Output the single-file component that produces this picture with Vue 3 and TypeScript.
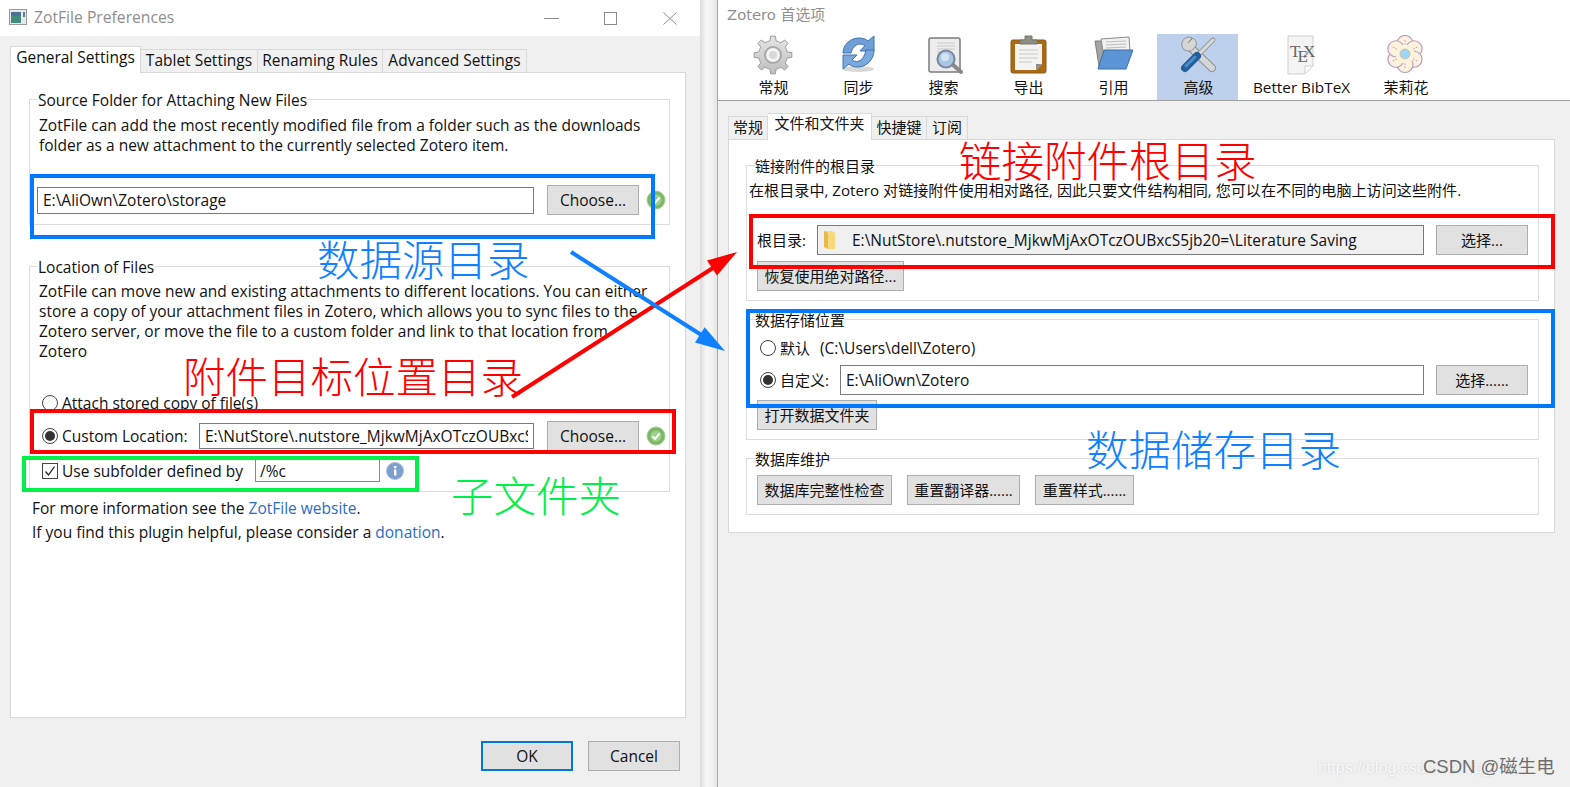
<script setup lang="ts">
const toolbar = [
  { label: '常规', icon: 'gear' },
  { label: '同步', icon: 'sync' },
  { label: '搜索', icon: 'search' },
  { label: '导出', icon: 'clip' },
  { label: '引用', icon: 'folder' },
  { label: '高级', icon: 'tools', active: true },
  { label: 'Better BibTeX', icon: 'tex', wide: true },
  { label: '茉莉花', icon: 'flower', last: true },
]

// 8 teeth gear outline, centred in a 40 box
function gearPath(): string {
  const pts: string[] = []
  const teeth = 8
  for (let i = 0; i < teeth; i++) {
    const a = (i / teeth) * Math.PI * 2
    const step = (Math.PI * 2) / teeth
    const list: [number, number][] = [
      [14.5, a - step * 0.5],
      [14.5, a - step * 0.27],
      [19, a - step * 0.16],
      [19, a + step * 0.16],
      [14.5, a + step * 0.27],
    ]
    for (const [r, t] of list) {
      pts.push(`${(20 + r * Math.cos(t)).toFixed(2)} ${(20 + r * Math.sin(t)).toFixed(2)}`)
    }
  }
  return 'M' + pts.join('L') + 'Z'
}
const gear = gearPath()

const petals = [0, 1, 2, 3, 4, 5].map((i) => {
  const a = (i * Math.PI) / 3 - Math.PI / 2
  return {
    cx: 20 + 10.5 * Math.cos(a),
    cy: 19 + 10.5 * Math.sin(a),
    dx: 20 + 9.5 * Math.cos(a),
    dy: 19 + 9.5 * Math.sin(a),
    ex: 20 + 14 * Math.cos(a),
    ey: 19 + 14 * Math.sin(a),
  }
})
</script>

<template>
  <div class="screen">
    <!-- ZotFile window -->
    <section class="win-left">
      <header class="titlebar">
        <svg class="app-icon" width="18" height="16" viewBox="0 0 18 16">
          <rect x="0.5" y="0.5" width="17" height="15" fill="#e8e8e8" stroke="#9a9a9a" />
          <rect x="2" y="3" width="10" height="11" fill="#3f8c7c" />
          <rect x="2" y="3" width="10" height="4" fill="#4d6f9c" />
          <rect x="14" y="3" width="2" height="5" fill="#5a7f8f" />
        </svg>
        <span class="title-text">ZotFile Preferences</span>
        <div class="controls">
          <span class="ctl"><svg width="15" height="13" viewBox="0 0 15 13"><path d="M0 6.5H15" stroke="#8c8c8c" /></svg></span>
          <span class="ctl"><svg width="13" height="13" viewBox="0 0 13 13"><rect x="0.5" y="0.5" width="12" height="12" fill="none" stroke="#8c8c8c" /></svg></span>
          <span class="ctl"><svg width="14" height="13" viewBox="0 0 14 13"><path d="M0.5 0.5L13.5 12.5M13.5 0.5L0.5 12.5" stroke="#8c8c8c" /></svg></span>
        </div>
      </header>

      <div class="left-body">
        <nav class="tabs">
          <span class="tab active">General Settings</span>
          <span class="tab t-tablet">Tablet Settings</span>
          <span class="tab t-rename">Renaming Rules</span>
          <span class="tab t-adv">Advanced Settings</span>
        </nav>
        <div class="panel left-panel">
          <fieldset class="group">
            <legend>Source Folder for Attaching New Files</legend>
            <p class="desc">ZotFile can add the most recently modified file from a folder such as the downloads<br />folder as a new attachment to the currently selected Zotero item.</p>
            <div class="row row-source">
              <input class="field f-source" readonly value="E:\AliOwn\Zotero\storage" />
              <button class="btn b-choose">Choose...</button>
              <svg class="ok-icon" width="20" height="20" viewBox="0 0 20 20">
                <circle cx="10" cy="10" r="9" fill="#7cb765" stroke="#a5cf92" />
                <circle cx="10" cy="10" r="5.5" fill="#9fd08a" />
                <path d="M6.5 10.2L9 12.7L13.6 7.6" fill="none" stroke="#fff" stroke-width="2" />
              </svg>
            </div>
          </fieldset>

          <fieldset class="group group-loc">
            <legend>Location of Files</legend>
            <p class="desc">ZotFile can move new and existing attachments to different locations. You can either<br />store a copy of your attachment files in Zotero, which allows you to sync files to the<br />Zotero server, or move the file to a custom folder and link to that location from<br />Zotero</p>
            <div class="row row-attach">
              <span class="radio"></span>
              <span class="opt">Attach stored copy of file(s)</span>
            </div>
            <div class="row row-custom">
              <span class="radio on"></span>
              <span class="opt custom-label">Custom Location:</span>
              <input class="field f-custom" readonly value="E:\NutStore\.nutstore_MjkwMjAxOTczOUBxcS5jb20=\Literature Saving" />
              <button class="btn b-choose">Choose...</button>
              <svg class="ok-icon" width="20" height="20" viewBox="0 0 20 20">
                <circle cx="10" cy="10" r="9" fill="#7cb765" stroke="#a5cf92" />
                <circle cx="10" cy="10" r="5.5" fill="#9fd08a" />
                <path d="M6.5 10.2L9 12.7L13.6 7.6" fill="none" stroke="#fff" stroke-width="2" />
              </svg>
            </div>
            <div class="row row-sub">
              <span class="check">
                <svg width="14" height="14" viewBox="0 0 14 14"><path d="M2.5 7.5L5.5 11L11.5 2.5" fill="none" stroke="#222" stroke-width="1.3" /></svg>
              </span>
              <span class="opt sub-label">Use subfolder defined by</span>
              <input class="field f-sub" readonly value="/%c" />
              <svg class="info-icon" width="18" height="18" viewBox="0 0 18 18">
                <circle cx="9" cy="9" r="8.5" fill="#7d9fcd" stroke="#a9c0de" />
                <rect x="8" y="7.5" width="2.4" height="6" fill="#fff" />
                <rect x="8" y="4" width="2.4" height="2.2" fill="#fff" />
              </svg>
            </div>
          </fieldset>

          <p class="more first">For more information see the <a class="link">ZotFile website</a>.</p>
          <p class="more">If you find this plugin helpful, please consider a <a class="link">donation</a>.</p>
        </div>
        <footer class="dlg-buttons">
          <button class="btn b-ok">OK</button>
          <button class="btn b-cancel">Cancel</button>
        </footer>
      </div>
    </section>

    <div class="gutter"></div>

    <!-- Zotero window -->
    <section class="win-right">
      <header class="right-head">
        <div class="right-title">Zotero 首选项</div>
        <div class="toolbar">
          <div
            v-for="item in toolbar"
            :key="item.label"
            class="tool"
            :class="{ active: item.active, wide: item.wide, last: item.last }"
          >
            <svg class="tool-icon" width="40" height="40" viewBox="0 0 40 40">
              <g v-if="item.icon === 'gear'">
                <defs>
                  <linearGradient id="gearFill" x1="0" y1="0" x2="0" y2="1">
                    <stop offset="0" stop-color="#e6e6e6" />
                    <stop offset="1" stop-color="#bdbdbd" />
                  </linearGradient>
                </defs>
                <path :d="gear" fill="url(#gearFill)" stroke="#9c9c9c" />
                <circle cx="20" cy="20" r="8" fill="#f4f4f4" stroke="#a8a8a8" stroke-width="2" />
                <circle cx="20" cy="20" r="4" fill="#d8d8d8" />
              </g>
              <g v-else-if="item.icon === 'sync'">
                <ellipse cx="20" cy="34" rx="16" ry="3" fill="#d8d8d8" />
                <path d="M5 18C5 9 13 3 21 3C25 3 28 4 30 6L36 1V16H22L27 10.5C21 7 15 10 13 18Z" fill="#6f9fd6" stroke="#3f74b4" />
                <path d="M36 15C36 25 28 32 20 32C16 32 13 31 11 29L5 34V20H19L14 25C20 29 26 25 28 15Z" fill="#7aa7dc" stroke="#3f74b4" />
              </g>
              <g v-else-if="item.icon === 'search'">
                <rect x="6" y="3" width="31" height="34" rx="2" fill="#ededed" stroke="#7b7b7b" stroke-width="1.5" />
                <path d="M14 8H32M14 11H32M14 14H32M14 17H20" stroke="#c9c9c9" />
                <path d="M29 29L38 37" stroke="#8a8a8a" stroke-width="4" stroke-linecap="round" />
                <circle cx="23" cy="24" r="8.5" fill="#a9c6e8" stroke="#7d8c9c" stroke-width="2.2" />
                <circle cx="22" cy="22" r="4" fill="#d4e3f4" />
              </g>
              <g v-else-if="item.icon === 'clip'">
                <rect x="3" y="5" width="35" height="33" rx="2" fill="#a96c14" stroke="#8b5a16" />
                <path d="M7 9H34V29L28 35H7Z" fill="#f3f3f1" />
                <path d="M34 29L28 35V29Z" fill="#8e8e8e" />
                <path d="M11 15H30M11 19H30M11 23H30M11 27H24" stroke="#c8c8c8" />
                <path d="M12 9V5H17V1H24V5H29V9Z" fill="#8f8f84" stroke="#77776c" />
              </g>
              <g v-else-if="item.icon === 'folder'">
                <path d="M2 6H12V31H6Z" fill="#a4a4a4" stroke="#7c7c7c" />
                <path d="M8 4L36 2L37 16H10Z" fill="#f1f1f1" stroke="#8a8a8a" />
                <path d="M13 7L33 6M13 10L33 9M13 13L33 12" stroke="#bdbdbd" />
                <path d="M11 15H40L33 34H5Z" fill="#5c95d6" stroke="#3d6ea8" />
              </g>
              <g v-else-if="item.icon === 'tools'">
                <path d="M11 11L34 33" stroke="#8f8f8f" stroke-width="8" stroke-linecap="round" />
                <path d="M11 11L34 33" stroke="#d5d5d5" stroke-width="6" stroke-linecap="round" />
                <path d="M14 3C10 1 5 3 4 8C3.500 10 4 12 5 13.500C7 16 12 17 14.500 15L18 11C19 8 18 5 15 3L10 8Z" fill="#d5d5d5" stroke="#8f8f8f" />
                <path d="M35 5L22 18" stroke="#9a9a9a" stroke-width="5" stroke-linecap="round" />
                <path d="M35 5L22 18" stroke="#d9d9d9" stroke-width="3" stroke-linecap="round" />
                <path d="M19 21L7 33" stroke="#235e9c" stroke-width="8" stroke-linecap="round" />
                <path d="M17 22L8 31" stroke="#4c8ccb" stroke-width="3" stroke-linecap="round" />
              </g>
              <g v-else-if="item.icon === 'tex'">
                <path d="M7 1H32V31L24 39H7Z" fill="#f4f4f4" stroke="#cfcfcf" />
                <path d="M32 31L24 39V31Z" fill="#fff" stroke="#cfcfcf" />
                <text class="tex-t" x="9" y="22">T</text>
                <text class="tex-t" x="16.500" y="27">E</text>
                <text class="tex-t" x="22" y="22">X</text>
              </g>
              <g v-else>
                <circle v-for="(p, i) in petals" :key="i" :cx="p.cx" :cy="p.cy" r="8" fill="#fdf3dc" stroke="#b99bc2" stroke-width="1.2" />
                <circle cx="20" cy="19" r="9.500" fill="#fdf3dc" />
                <path
                  v-for="(p, i) in petals"
                  :key="'d' + i"
                  :d="`M${p.dx} ${p.dy}L${p.ex} ${p.ey}`"
                  stroke="#c9a6c9"
                  stroke-width="1.2"
                  stroke-dasharray="1.500 1.500"
                />
                <circle cx="20" cy="19" r="5" fill="#9dd6fb" stroke="#d3b98a" stroke-width="0.8" />
              </g>
            </svg>
            <span class="tool-label">{{ item.label }}</span>
          </div>
        </div>
      </header>

      <div class="right-body">
        <nav class="tabs right-tabs">
          <span class="tab r1">常规</span>
          <span class="tab active r2">文件和文件夹</span>
          <span class="tab r3">快捷键</span>
          <span class="tab r4">订阅</span>
        </nav>
        <div class="panel right-panel">
          <fieldset class="rgroup">
            <legend>链接附件的根目录</legend>
            <p class="rdesc">在根目录中, Zotero 对链接附件使用相对路径, 因此只要文件结构相同, 您可以在不同的电脑上访问这些附件.</p>
            <div class="row rrow rrow-base">
              <span class="rlabel">根目录:</span>
              <div class="field f-base">
                <svg width="14" height="20" viewBox="0 0 14 20">
                  <path d="M1 1H9L12 3V19H5L1 17Z" fill="#f7d97a" />
                  <path d="M1 1L5 3V19L1 17Z" fill="#e8b94a" />
                </svg>
                <span class="base-path">E:\NutStore\.nutstore_MjkwMjAxOTczOUBxcS5jb20=\Literature Saving</span>
              </div>
              <button class="btn b-pick">选择...</button>
            </div>
            <button class="btn b-restore">恢复使用绝对路径...</button>
          </fieldset>

          <fieldset class="rgroup">
            <legend>数据存储位置</legend>
            <div class="row rrow rrow-default">
              <span class="radio"></span>
              <span class="ropt">默认<span class="home-path">(C:\Users\dell\Zotero)</span></span>
            </div>
            <div class="row rrow rrow-data">
              <span class="radio on"></span>
              <span class="ropt data-label">自定义:</span>
              <input class="field f-data" readonly value="E:\AliOwn\Zotero" />
              <button class="btn b-pick">选择......</button>
            </div>
            <button class="btn b-open">打开数据文件夹</button>
          </fieldset>

          <fieldset class="rgroup">
            <legend>数据库维护</legend>
            <div class="row db-row">
              <button class="btn b-db1">数据库完整性检查</button>
              <button class="btn b-db2">重置翻译器......</button>
              <button class="btn b-db3">重置样式......</button>
            </div>
          </fieldset>
        </div>
      </div>
    </section>

    <!-- hand drawn annotations on top of the screenshot -->
    <svg class="arrows" width="1570" height="787" viewBox="0 0 1570 787">
      <path d="M512 397L716 266" stroke="#ff0000" stroke-width="4" fill="none" />
      <path d="M737 252L707 260.400L717 275.600Z" fill="#ff0000" />
      <path d="M571 252L703 336" stroke="#0f80ff" stroke-width="4" fill="none" />
      <path d="M725 351L695 342.400L704.700 327.200Z" fill="#0f80ff" />
    </svg>
    <div class="mark m-source"></div>
    <div class="mark m-custom"></div>
    <div class="mark m-sub"></div>
    <div class="mark m-base"></div>
    <div class="mark m-data"></div>
    <span class="note n-source">数据源目录</span>
    <span class="note n-custom">附件目标位置目录</span>
    <span class="note n-sub">子文件夹</span>
    <span class="note n-base">链接附件根目录</span>
    <span class="note n-data">数据储存目录</span>

    <span class="wm-url">https://blog.csdn.net/qq_</span>
    <span class="wm">CSDN @磁生电</span>
  </div>
</template>

<style>
html,
body {
  margin: 0;
  background: #f0f0f0;
}
</style>

<style scoped>
.screen {
  position: relative;
  display: flex;
  width: 1570px;
  height: 787px;
  overflow: hidden;
  font-family: "Open Sans", "Noto Sans CJK SC", sans-serif;
  font-size: 15.5px;
  line-height: 20px;
  color: #111;
  background: #f0f0f0;
}

/* left window */
.win-left {
  width: 700px;
  flex: none;
  display: flex;
  flex-direction: column;
}
.titlebar {
  height: 36px;
  flex: none;
  display: flex;
  align-items: center;
  background: #fff;
  padding-left: 9px;
}
.app-icon {
  margin-right: 7px;
  margin-top: -2px;
}
.title-text {
  color: #8e8e8e;
  font-size: 15.7px;
  margin-top: -2px;
}
.controls {
  margin-left: auto;
  display: flex;
  padding-right: 1px;
}
.ctl {
  width: 59px;
  height: 30px;
  display: flex;
  align-items: center;
  justify-content: center;
}
.left-body {
  flex: 1;
  padding: 10px 14px 0 10px;
}
.tabs {
  display: flex;
  align-items: flex-end;
  height: 26px;
  position: relative;
}
.tab {
  box-sizing: border-box;
  height: 23px;
  border: 1px solid #d9d9d9;
  border-bottom: none;
  border-left: none;
  text-align: center;
  line-height: 21px;
  white-space: nowrap;
}
.tab.active {
  height: 27px;
  margin-bottom: -1px;
  background: #fff;
  border-left: 1px solid #d9d9d9;
  line-height: 21px;
  width: 131px;
  position: relative;
}
.t-tablet { width: 117px; }
.t-rename { width: 125px; }
.t-adv { width: 144px; }
.panel {
  box-sizing: border-box;
  background: #fff;
  border: 1px solid #d9d9d9;
}
.left-panel {
  height: 646px;
  padding: 15px 15px 0 18px;
}
fieldset {
  margin: 0;
  min-width: 0;
}
.group {
  border: 1px solid #dcdcdc;
  padding: 0 7px 9px;
}
.group legend {
  padding: 2px 1px 0;
  line-height: 20px;
}
.group-loc {
  margin-top: 30px;
}
.desc {
  margin: 5px 0 0 2px;
  white-space: nowrap;
}
.group-loc .desc {
  margin-top: 4px;
}
.row {
  display: flex;
  align-items: center;
}
.row > * {
  flex: none;
}
.row-source {
  margin-top: 30px;
  height: 30px;
}
.field {
  box-sizing: border-box;
  border: 1px solid #7a7a7a;
  background: #fff;
  font: inherit;
  color: inherit;
  padding: 0 5px;
  margin: 0;
  outline: none;
  min-width: 0;
}
.f-source {
  width: 497px;
  height: 27px;
}
.btn {
  box-sizing: border-box;
  background: #e1e1e1;
  border: 1px solid #adadad;
  font: inherit;
  color: inherit;
  padding: 0;
  white-space: nowrap;
  height: 30px;
}
.b-choose {
  width: 92px;
  margin-left: 13px;
}
.ok-icon {
  margin-left: 7px;
}
.row-attach {
  margin-top: 32px;
  height: 20px;
  padding-left: 5px;
}
.row-custom {
  margin-top: 8px;
  height: 30px;
  padding-left: 5px;
}
.row-sub {
  margin-top: 8px;
  height: 23px;
  padding-left: 5px;
}
.radio {
  box-sizing: border-box;
  width: 16px;
  height: 16px;
  flex: none;
  border: 1px solid #444;
  border-radius: 50%;
  background: #fff;
  display: flex;
  align-items: center;
  justify-content: center;
}
.radio.on::after {
  content: "";
  width: 10px;
  height: 10px;
  border-radius: 50%;
  background: #333;
}
.opt {
  margin-left: 4px;
  white-space: nowrap;
}
.custom-label {
  width: 137px;
}
.f-custom {
  width: 335px;
  height: 26px;
}
.check {
  box-sizing: border-box;
  width: 16px;
  height: 16px;
  flex: none;
  border: 1px solid #444;
  display: flex;
  align-items: center;
  justify-content: center;
}
.sub-label {
  width: 193px;
}
.f-sub {
  width: 125px;
  height: 23px;
  padding: 0 4px;
  border-color: #8a8a8a;
}
.info-icon {
  margin-left: 6px;
}
.more {
  margin: 4px 0 0 3px;
}
.more.first {
  margin-top: 6px;
}
.link {
  color: #2a6cc4;
}
.dlg-buttons {
  display: flex;
  justify-content: flex-end;
  gap: 15px;
  padding-right: 6px;
  margin-top: 23px;
}
.dlg-buttons .btn {
  width: 92px;
}
.b-ok {
  border: 2px solid #0078d7;
}

/* gutter between the two windows */
.gutter {
  width: 17px;
  flex: none;
  background: linear-gradient(90deg, #dcdcdc 0, #f5f5f5 35%, #f2f2f2 70%, #e4e4e4 100%);
}

/* right window */
.win-right {
  flex: 1;
  min-width: 0;
  display: flex;
  flex-direction: column;
  border-left: 1px solid #a8a8a8;
  font-size: 15px;
}
.right-head {
  height: 100px;
  flex: none;
  background: #fff;
  border-bottom: 1px solid #a0a0a0;
}
.right-title {
  height: 34px;
  box-sizing: border-box;
  padding: 5px 0 0 9px;
  color: #8e8e8e;
  font-family: "DejaVu Sans", "Noto Sans CJK SC", sans-serif;
  font-size: 14.8px;
}
.toolbar {
  display: flex;
  gap: 4px;
  padding-left: 14px;
}
.tool {
  width: 81px;
  height: 66px;
  flex: none;
  display: flex;
  flex-direction: column;
  align-items: center;
}
.tool.active {
  background: #bdd0ec;
}
.tool.wide {
  width: 117px;
  font-size: 15.3px;
}
.tool.last {
  width: 84px;
}
.tool-icon {
  margin-top: 1px;
  flex: none;
}
.tool-label {
  margin: 2px 0 0 2px;
  white-space: nowrap;
}
.tex-t {
  font-family: "Liberation Serif", serif;
  font-size: 17px;
  fill: #666;
}
.right-body {
  flex: 1;
  padding: 11px 15px 0 10px;
}
.right-tabs {
  height: 27px;
}
.right-tabs .tab {
  line-height: 20px;
}
.right-tabs .tab.active {
  line-height: 19px;
}
.r1 { width: 40px; border-left: 1px solid #d9d9d9; }
.tab.r2 { width: 104px; border-left: none; }
.r3 { width: 55px; }
.r4 { width: 41px; }
.right-panel {
  padding: 14px 15px 17px 17px;
}
.rgroup {
  border: 1px solid #dcdcdc;
  padding: 0 10px 9px;
  margin-top: 7px;
}
.rgroup:first-child {
  margin-top: 0;
}
.rgroup legend {
  padding: 2px 0 0;
  margin-left: -2px;
  line-height: 20px;
}
.rdesc {
  margin: 4px 0 0 -8px;
  white-space: nowrap;
  font-size: 15.1px;
}
.rrow {
  height: 30px;
}
.rrow-base {
  margin-top: 25px;
}
.rlabel {
  width: 60px;
}
.f-base {
  width: 607px;
  height: 30px;
  display: flex;
  align-items: center;
  background: #f0f0f0;
  padding: 0 0 0 5px;
}
.base-path {
  margin-left: 15px;
  white-space: nowrap;
  font-size: 15.5px;
}
.b-pick {
  width: 92px;
  height: 30px;
  margin-left: 12px;
}
.b-restore {
  display: block;
  width: 147px;
  margin-top: 6px;
}
.rrow-default {
  margin-top: 8px;
  height: 20px;
  margin-left: 3px;
}
.home-path {
  margin-left: 10px;
  font-size: 15.5px;
}
.rrow-data {
  margin-top: 7px;
  margin-left: 3px;
}
.ropt {
  margin-left: 4px;
  white-space: nowrap;
}
.data-label {
  width: 60px;
}
.f-data {
  width: 584px;
  height: 30px;
  font-size: 15.5px;
}
.b-open {
  display: block;
  width: 120px;
  margin-top: 5px;
}
.db-row {
  margin-top: 6px;
  gap: 15px;
}
.b-db1 { width: 135px; }
.b-db2 { width: 113px; }
.b-db3 { width: 99px; }

/* annotations */
.arrows {
  position: absolute;
  left: 0;
  top: 0;
  pointer-events: none;
}
.mark {
  position: absolute;
  box-sizing: border-box;
  border: 4px solid #0078ff;
}
.m-source { left: 30px; top: 174px; width: 625px; height: 65px; }
.m-custom { left: 30px; top: 409px; width: 646px; height: 45px; border-color: #ff0000; }
.m-sub { left: 22px; top: 456px; width: 397px; height: 36px; border-color: #00f04a; }
.m-base { left: 749px; top: 214px; width: 806px; height: 55px; border-color: #ff0000; }
.m-data { left: 746px; top: 309px; width: 809px; height: 99px; }
.note {
  position: absolute;
  font-size: 42.5px;
  line-height: 46px;
  font-weight: 300;
  white-space: nowrap;
}
.n-source { left: 317px; top: 237px; color: #0f80ff; }
.n-custom { left: 183px; top: 354px; color: #ff0000; }
.n-sub { left: 451px; top: 473px; color: #00f04a; }
.n-base { left: 959px; top: 138px; color: #ff0000; }
.n-data { left: 1086px; top: 427px; color: #0f80ff; }
.wm-url {
  position: absolute;
  left: 1318px;
  top: 758px;
  font-family: "Liberation Sans", sans-serif;
  font-size: 16px;
  color: #f9f9f9;
  text-shadow: 0 0 2px #c8c8c8;
  white-space: nowrap;
}
.wm {
  position: absolute;
  left: 1423px;
  top: 757px;
  font-family: "Liberation Sans", "Noto Sans CJK SC", sans-serif;
  font-size: 18.5px;
  color: #6e6e6e;
  white-space: nowrap;
}
</style>
